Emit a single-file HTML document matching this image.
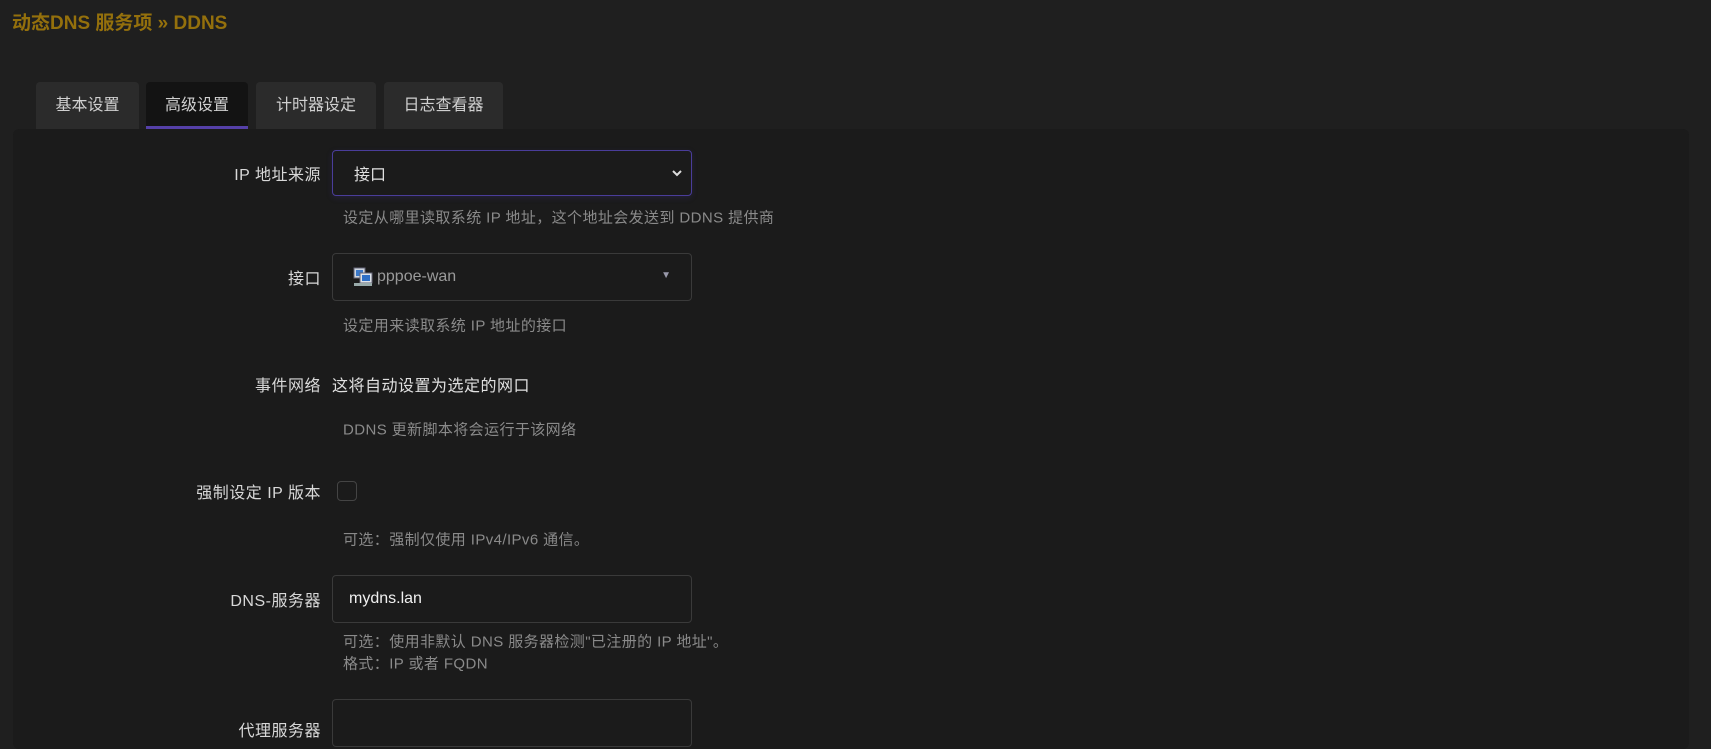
<!DOCTYPE html>
<html><head><meta charset="utf-8"><style>
*{box-sizing:border-box;margin:0;padding:0}
body{width:1711px;height:721px;overflow:hidden;background:#1f1f1f;font-family:"Liberation Sans","Noto Sans CJK SC",sans-serif;color:#d8d8d8;position:relative}
.title{position:absolute;left:12px;top:8px;font-size:19px;font-weight:bold;color:#94700c}
.tab{position:absolute;top:82px;height:47px;background:#2b2b2b;border-radius:4px 4px 0 0;font-size:16px;color:#d0d0d0;text-align:center;line-height:47px}
.tab.act{background:#131313;box-shadow:inset 0 -3px 0 #5540a8}
.panel{position:absolute;left:13px;top:129px;width:1676px;height:620px;background:#1b1b1b;border-radius:6px}
.lbl{position:absolute;right:calc(1711px - 321px);font-size:16px;letter-spacing:0.5px;color:#d8d8d8;white-space:nowrap;transform:translateY(-50%)}
.help{position:absolute;left:343px;font-size:15px;letter-spacing:0.4px;color:#8a8a8a;white-space:nowrap;transform:translateY(-50%)}
.box{position:absolute;left:332px;width:360px;border:1px solid #3a3a3a;border-radius:4px;background:#1b1b1b;display:flex;align-items:center}
</style></head><body>
<div class="title">动态DNS 服务项 » DDNS</div>
<div class="tab" style="left:36px;width:103px">基本设置</div>
<div class="tab act" style="left:146px;width:102px">高级设置</div>
<div class="tab" style="left:256px;width:120px">计时器设定</div>
<div class="tab" style="left:384px;width:119px">日志查看器</div>
<div class="panel"></div>

<div class="lbl" style="top:173px">IP 地址来源</div>
<div class="box" style="top:150px;height:46px;border-color:#4a3d9a;box-shadow:0 2px 6px rgba(60,50,140,.25)">
<span style="margin-left:21px;font-size:16px;color:#e0e0e0">接口</span>
<svg style="position:absolute;right:8px;top:17px" width="12" height="10" viewBox="0 0 12 10"><path d="M2 3l4 4 4-4" stroke="#ddd" stroke-width="2" fill="none"/></svg>
</div>
<div class="help" style="top:217px">设定从哪里读取系统 IP 地址，这个地址会发送到 DDNS 提供商</div>

<div class="lbl" style="top:277px">接口</div>
<div class="box" style="top:253px;height:48px">
<svg style="margin-left:20px" width="20" height="20" viewBox="0 0 20 20"><rect x="1" y="1" width="11" height="10" fill="#cfd6e0" stroke="#667"/><rect x="3" y="3" width="7" height="6" fill="#3a78c8"/><rect x="7" y="6" width="12" height="10" fill="#dde3ea" stroke="#667"/><rect x="9" y="8" width="8" height="6" fill="#2e6fc6"/><rect x="1" y="16" width="18" height="3" fill="#9aa"/></svg>
<span style="margin-left:4px;font-size:16px;color:#9a9a9a">pppoe-wan</span>
<span style="position:absolute;right:20px;top:16px;font-size:10px;color:#99a">▼</span>
</div>
<div class="help" style="top:325px">设定用来读取系统 IP 地址的接口</div>

<div class="lbl" style="top:384px">事件网络</div>
<div style="position:absolute;left:332px;top:384px;transform:translateY(-50%);font-size:16px;letter-spacing:0.5px;color:#e0e0e0">这将自动设置为选定的网口</div>
<div class="help" style="top:429px">DDNS 更新脚本将会运行于该网络</div>

<div class="lbl" style="top:491px">强制设定 IP 版本</div>
<div style="position:absolute;left:337px;top:481px;width:20px;height:20px;border:1px solid #444;border-radius:4px"></div>
<div class="help" style="top:539px">可选：强制仅使用 IPv4/IPv6 通信。</div>

<div class="lbl" style="top:599px">DNS-服务器</div>
<div class="box" style="top:575px;height:48px">
<span style="margin-left:16px;font-size:16px;color:#f0f0f0">mydns.lan</span>
</div>
<div class="help" style="top:641px">可选：使用非默认 DNS 服务器检测"已注册的 IP 地址"。</div>
<div class="help" style="top:663px">格式：IP 或者 FQDN</div>

<div class="lbl" style="top:729px">代理服务器</div>
<div class="box" style="top:699px;height:48px"></div>
</body></html>
